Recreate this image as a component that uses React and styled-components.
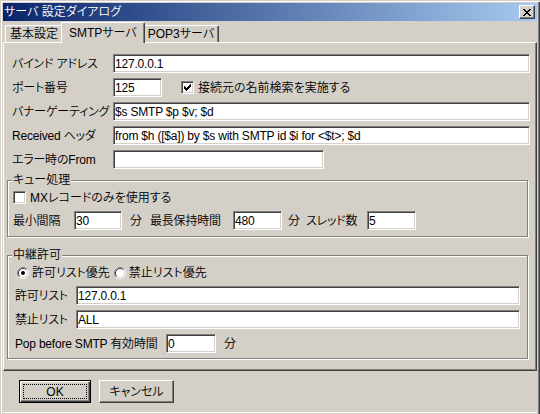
import styled, { createGlobalStyle } from 'styled-components';

const GlobalStyle = createGlobalStyle`
  html, body {
    margin: 0;
    padding: 0;
    background: #d4d0c8;
  }
  body {
    font-family: 'Liberation Sans', 'Noto Sans CJK JP', sans-serif;
    font-size: 12px;
    font-weight: 350;
    line-height: 14px;
    color: #000;
    font-feature-settings: 'palt';
  }
  *, *::before, *::after {
    box-sizing: border-box;
  }
`;

const Window = styled.div`
  width: 540px;
  height: 414px;
  background: #d4d0c8;
  padding: 3px 3px 0 3px;
  display: flex;
  flex-direction: column;
  overflow: hidden;
  box-shadow: inset 1px 1px 0 #d4d0c8, inset 2px 2px 0 #fff,
    inset -1px 0 0 #404040, inset -2px 0 0 #808080;
`;

const TitleBar = styled.div`
  height: 18px;
  flex-shrink: 0;
  display: flex;
  align-items: center;
  justify-content: space-between;
  padding: 0 2px 0 1px;
  background: linear-gradient(to right, #0a246a, #a6caf0);
  color: #fff;
`;

const TitleText = styled.span`
  white-space: nowrap;
`;

const CloseBtn = styled.div`
  width: 16px;
  height: 14px;
  background: #d4d0c8;
  border: 1px solid;
  border-color: #fff #404040 #404040 #fff;
  box-shadow: inset -1px -1px 0 #808080;
  display: flex;
  align-items: center;
  justify-content: center;
  padding-right: 1px;
`;

const TabStrip = styled.div`
  height: 22px;
  margin-bottom: -1px;
  flex-shrink: 0;
  display: flex;
  align-items: flex-end;
  padding-left: 2px;
`;

const Tab = styled.div`
  height: ${(p) => (p.$active ? 21 : 17)}px;
  margin: ${(p) => (p.$active ? '0 -2px' : '0 0 1px')};
  padding: ${(p) => (p.$active ? '0 7px' : '0 4px')};
  display: flex;
  align-items: center;
  white-space: nowrap;
  background: #d4d0c8;
  border-top: 1px solid #fff;
  border-left: 1px solid #fff;
  border-right: 1px solid #404040;
  border-radius: 2px 2px 0 0;
  box-shadow: inset -1px 0 0 #808080;
  position: relative;
  z-index: ${(p) => (p.$active ? 2 : 1)};
`;

const Panel = styled.div`
  height: 329px;
  flex-shrink: 0;
  display: flex;
  flex-direction: column;
  padding: 11px 0 0 3px;
  border-top: 1px solid #fff;
  border-left: 1px solid #fff;
  border-right: 1px solid #404040;
  border-bottom: 1px solid #404040;
  box-shadow: inset -1px -1px 0 #808080;
`;

const Fields = styled.div`
  display: flex;
  flex-direction: column;
  gap: 5px;
  padding: 0 6px 0 5px;
`;

const Row = styled.div`
  display: flex;
  align-items: center;
  height: ${(p) => p.$h || 19}px;
  flex-shrink: 0;
`;

const Label = styled.span`
  width: ${(p) => p.$w}px;
  flex-shrink: 0;
  white-space: nowrap;
  letter-spacing: -0.2px;
`;

const Unit = styled.span`
  margin-left: ${(p) => p.$ml}px;
  width: ${(p) => p.$w || 12}px;
  flex-shrink: 0;
  white-space: nowrap;
`;

const TextBox = styled.input`
  height: 19px;
  width: ${(p) => (p.$w ? `${p.$w}px` : 'auto')};
  flex: ${(p) => (p.$w ? 'none' : '1')};
  min-width: 0;
  margin: 0;
  padding: 0 1px;
  font: inherit;
  letter-spacing: -0.2px;
  color: #000;
  background: #fff;
  border: 1px solid;
  border-color: #808080 #fff #fff #808080;
  box-shadow: inset 1px 1px 0 #404040, inset -1px -1px 0 #d4d0c8;
  outline: none;
`;

const Box = styled.span`
  width: 13px;
  height: 13px;
  flex-shrink: 0;
  margin-left: ${(p) => p.$ml || 0}px;
  margin-right: 4px;
  background: #fff;
  border: 1px solid;
  border-color: #808080 #fff #fff #808080;
  box-shadow: inset 1px 1px 0 #404040, inset -1px -1px 0 #d4d0c8;
  display: flex;
  align-items: center;
  justify-content: center;
`;

const Group = styled.fieldset`
  margin: ${(p) => p.$top}px 8px 0 0;
  padding: 0;
  min-inline-size: 0;
  border: 1px solid #808080;
  box-shadow: inset 1px 1px 0 #fff, 1px 1px 0 #fff;
`;

const Legend = styled.legend`
  margin-left: 4px;
  padding: 0 1px;
  line-height: 14px;
  background: #d4d0c8;
`;

const GroupBody = styled.div`
  display: flex;
  flex-direction: column;
  padding: ${(p) => p.$pad};
  gap: ${(p) => p.$gap || 5}px;
`;

const Option = styled.label`
  display: flex;
  align-items: center;
  margin-left: ${(p) => p.$ml || 0}px;
  white-space: nowrap;

  svg {
    margin-right: 3px;
    flex-shrink: 0;
  }
`;

const Footer = styled.div`
  flex: 1;
  display: flex;
  align-items: flex-start;
  gap: 8px;
  padding: 9px 0 0 16px;
  box-shadow: inset 0 -1px 0 #d4d0c8, inset 0 -2px 0 #fff;
`;

const Button = styled.button`
  position: relative;
  width: ${(p) => p.$w}px;
  height: 23px;
  margin: 0;
  padding: 0;
  font: inherit;
  color: #000;
  background: #d4d0c8;
  border: 1px solid;
  border-color: ${(p) => (p.$default ? '#000' : '#fff #404040 #404040 #fff')};
  box-shadow: ${(p) =>
    p.$default
      ? 'inset 1px 1px 0 #fff, inset -1px -1px 0 #404040, inset -2px -2px 0 #808080'
      : 'inset -1px -1px 0 #808080'};

  &::after {
    content: '';
    display: ${(p) => (p.$default ? 'block' : 'none')};
    position: absolute;
    inset: 3px;
    border: 1px dotted #000;
  }
`;

const CloseGlyph = () => {
  const rows = ['XX....XX', '.XX..XX.', '..XXXX..', '...XX...', '..XXXX..', '.XX..XX.', 'XX....XX'];
  return (
    <svg width="8" height="7" viewBox="0 0 8 7" shapeRendering="crispEdges">
      {rows.flatMap((r, y) =>
        r.split('').map((c, x) => (c === 'X' ? <rect key={`${x}-${y}`} x={x} y={y} width="1" height="1" fill="#000" /> : null))
      )}
    </svg>
  );
};

const CheckGlyph = () => {
  const tops = [2, 3, 4, 3, 2, 1, 0];
  return (
    <svg width="7" height="7" viewBox="0 0 7 7" shapeRendering="crispEdges">
      {tops.map((t, x) => (
        <rect key={x} x={x} y={t} width="1" height="3" fill="#000" />
      ))}
    </svg>
  );
};

const Check = ({ checked, ml }) => <Box $ml={ml}>{checked && <CheckGlyph />}</Box>;

const Radio = ({ checked }) => (
  <svg width="12" height="12" viewBox="0 0 12 12">
    <circle cx="6" cy="6" r="5" fill="#fff" />
    <path d="M2.11 9.89 A5.5 5.5 0 0 1 9.89 2.11" stroke="#808080" fill="none" />
    <path d="M9.89 2.11 A5.5 5.5 0 0 1 2.11 9.89" stroke="#fff" fill="none" />
    <path d="M2.82 9.18 A4.5 4.5 0 0 1 9.18 2.82" stroke="#404040" fill="none" />
    <path d="M9.18 2.82 A4.5 4.5 0 0 1 2.82 9.18" stroke="#d4d0c8" fill="none" />
    {checked && <circle cx="6" cy="6" r="2" fill="#000" />}
  </svg>
);

export default function App() {
  return (
    <>
      <GlobalStyle />
      <Window>
        <TitleBar>
          <TitleText>サーバ 設定ダイアログ</TitleText>
          <CloseBtn>
            <CloseGlyph />
          </CloseBtn>
        </TitleBar>
        <TabStrip>
          <Tab>基本設定</Tab>
          <Tab $active>SMTPサーバ</Tab>
          <Tab>POP3サーバ</Tab>
        </TabStrip>
        <Panel>
          <Fields>
            <Row>
              <Label $w={101}>バインド アドレス</Label>
              <TextBox defaultValue="127.0.0.1" />
            </Row>
            <Row>
              <Label $w={101}>ポート番号</Label>
              <TextBox $w={49} defaultValue="125" />
              <Check checked ml={19} />
              <span>接続元の名前検索を実施する</span>
            </Row>
            <Row>
              <Label $w={101}>バナーゲーティング</Label>
              <TextBox defaultValue="$s SMTP $p $v; $d" />
            </Row>
            <Row>
              <Label $w={101}>Received ヘッダ</Label>
              <TextBox defaultValue="from $h ([$a]) by $s with SMTP id $i for <$t>; $d" />
            </Row>
            <Row>
              <Label $w={101}>エラー時のFrom</Label>
              <TextBox $w={211} defaultValue="" />
            </Row>
          </Fields>

          <Group $top={4}>
            <Legend>キュー処理</Legend>
            <GroupBody $pad="1px 0 6px 5px" $gap={4}>
              <Row>
                <Check ml={0} />
                <span>MXレコードのみを使用する</span>
              </Row>
              <Row>
                <Label $w={61}>最小間隔</Label>
                <TextBox $w={48} defaultValue="30" />
                <Unit $ml={8} $w={20}>分</Unit>
                <Label $w={83}>最長保持時間</Label>
                <TextBox $w={49} defaultValue="480" />
                <Unit $ml={6} $w={18}>分</Unit>
                <Label $w={61}>スレッド数</Label>
                <TextBox $w={49} defaultValue="5" />
              </Row>
            </GroupBody>
          </Group>

          <Group $top={11}>
            <Legend>中継許可</Legend>
            <GroupBody $pad="3px 7px 5px 7px">
              <Row $h={16}>
                <Option $ml={2}>
                  <Radio checked />
                  許可リスト優先
                </Option>
                <Option $ml={4}>
                  <Radio />
                  禁止リスト優先
                </Option>
              </Row>
              <Row>
                <Label $w={61}>許可リスト</Label>
                <TextBox defaultValue="127.0.0.1" />
              </Row>
              <Row>
                <Label $w={61}>禁止リスト</Label>
                <TextBox defaultValue="ALL" />
              </Row>
              <Row>
                <Label $w={151}>Pop before SMTP 有効時間</Label>
                <TextBox $w={50} defaultValue="0" />
                <Unit $ml={8}>分</Unit>
              </Row>
            </GroupBody>
          </Group>
        </Panel>
        <Footer>
          <Button $w={72} $default>
            OK
          </Button>
          <Button $w={75}>キャンセル</Button>
        </Footer>
      </Window>
    </>
  );
}
